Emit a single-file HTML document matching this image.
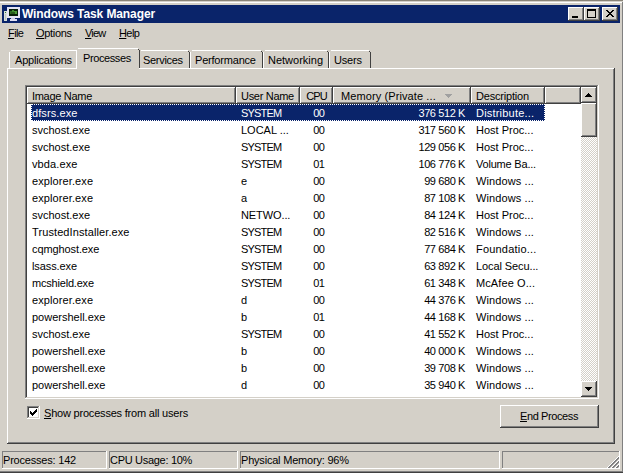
<!DOCTYPE html>
<html><head><meta charset="utf-8"><style>
html,body{margin:0;padding:0;width:623px;height:473px;overflow:hidden;background:#D4D0C8;position:relative}
div{position:absolute}
.t{font-family:"Liberation Sans",sans-serif;font-size:11px;white-space:nowrap;color:#000;letter-spacing:-0.2px}
u{text-decoration:underline;text-underline-offset:1px}
</style></head><body>
<div style="left:0px;top:0px;width:623px;height:1px;background:#8a8478"></div><div style="left:0px;top:1px;width:623px;height:1px;background:#D4D0C8"></div><div style="left:0px;top:2px;width:622px;height:1px;background:#FFFFFF"></div><div style="left:622px;top:2px;width:1px;height:471px;background:#808080"></div><div style="left:0px;top:471px;width:622px;height:1px;background:#808080"></div><div style="left:0px;top:472px;width:623px;height:1px;background:#404040"></div><div style="left:2px;top:5px;width:618px;height:18px;background:#0A246A"></div><svg style="position:absolute;left:4px;top:6px" width="16" height="16" viewBox="0 0 16 16" shape-rendering="crispEdges">
<rect x="0" y="5" width="3" height="10" fill="#d8e0d8"/>
<rect x="1" y="6" width="1" height="1" fill="#2a7a3a"/>
<rect x="1" y="8" width="1" height="6" fill="#b8c0c0"/>
<rect x="3" y="1" width="13" height="11" fill="#e4e4f4"/>
<rect x="5" y="3" width="9" height="7" fill="#082008"/>
<rect x="6" y="5" width="2" height="3" fill="#2e6e22"/>
<rect x="8" y="4" width="2" height="3" fill="#3e8a2e"/>
<rect x="10" y="5" width="3" height="3" fill="#4a9a36"/>
<rect x="7" y="6" width="4" height="2" fill="#285a1c"/>
<rect x="7" y="12" width="4" height="1" fill="#c8c8e0"/>
<rect x="6" y="13" width="7" height="2" fill="#e0e0f4"/>
</svg><div class="t" style="left:22px;top:5px;color:#fff;font-weight:bold;line-height:18px;letter-spacing:-0.1px;font-size:12px">Windows Task Manager</div><div style="left:568px;top:7px;width:16px;height:14px;background:#404040"></div><div style="left:568px;top:7px;width:15px;height:13px;background:#FFFFFF"></div><div style="left:569px;top:8px;width:14px;height:12px;background:#808080"></div><div style="left:569px;top:8px;width:13px;height:11px;background:#D4D0C8"></div><div style="left:570px;top:9px;width:12px;height:10px;background:#D4D0C8"></div><div style="left:584px;top:7px;width:16px;height:14px;background:#404040"></div><div style="left:584px;top:7px;width:15px;height:13px;background:#FFFFFF"></div><div style="left:585px;top:8px;width:14px;height:12px;background:#808080"></div><div style="left:585px;top:8px;width:13px;height:11px;background:#D4D0C8"></div><div style="left:586px;top:9px;width:12px;height:10px;background:#D4D0C8"></div><div style="left:602px;top:7px;width:16px;height:14px;background:#404040"></div><div style="left:602px;top:7px;width:15px;height:13px;background:#FFFFFF"></div><div style="left:603px;top:8px;width:14px;height:12px;background:#808080"></div><div style="left:603px;top:8px;width:13px;height:11px;background:#D4D0C8"></div><div style="left:604px;top:9px;width:12px;height:10px;background:#D4D0C8"></div><div style="left:572px;top:16px;width:6px;height:2px;background:#000"></div><div style="left:587px;top:9px;width:9px;height:9px;border:1px solid #000;border-top-width:2px;box-sizing:border-box"></div><svg style="position:absolute;left:606px;top:10px" width="8" height="7" viewBox="0 0 8 7" shape-rendering="crispEdges"><path d="M0 0h2v1h-2zM6 0h2v1h-2zM1 1h2v1h-2zM5 1h2v1h-2zM2 2h4v1h-4zM3 3h2v1h-2zM2 4h4v1h-4zM1 5h2v1h-2zM5 5h2v1h-2zM0 6h2v1h-2zM6 6h2v1h-2z" fill="#000"/></svg><div class="t" style="left:8px;top:27px;line-height:13px;letter-spacing:-0.6px"><u>F</u>ile</div><div class="t" style="left:36px;top:27px;line-height:13px;letter-spacing:-0.3px"><u>O</u>ptions</div><div class="t" style="left:85px;top:27px;line-height:13px;letter-spacing:-0.8px"><u>V</u>iew</div><div class="t" style="left:119px;top:27px;line-height:13px;letter-spacing:-0.6px"><u>H</u>elp</div><div style="left:7px;top:68px;width:608px;height:376px;background:#404040"></div><div style="left:7px;top:68px;width:607px;height:375px;background:#FFFFFF"></div><div style="left:8px;top:69px;width:606px;height:374px;background:#808080"></div><div style="left:8px;top:69px;width:605px;height:373px;background:#D4D0C8"></div><div style="left:9px;top:52px;width:1px;height:16px;background:#FFFFFF"></div><div style="left:10px;top:51px;width:1px;height:1px;background:#FFFFFF"></div><div style="left:11px;top:50px;width:65px;height:1px;background:#FFFFFF"></div><div style="left:10px;top:51px;width:66px;height:17px;background:#D4D0C8"></div><div style="left:11px;top:51px;width:65px;height:17px;background:#D4D0C8"></div><div style="left:77px;top:52px;width:1px;height:16px;background:#404040"></div><div style="left:76px;top:51px;width:1px;height:1px;background:#404040"></div><div class="t" style="left:15px;top:54px;line-height:13px;letter-spacing:-0.2px">Applications</div><div style="left:139px;top:52px;width:1px;height:16px;background:#FFFFFF"></div><div style="left:140px;top:51px;width:1px;height:1px;background:#FFFFFF"></div><div style="left:141px;top:50px;width:47px;height:1px;background:#FFFFFF"></div><div style="left:140px;top:51px;width:48px;height:17px;background:#D4D0C8"></div><div style="left:141px;top:51px;width:47px;height:17px;background:#D4D0C8"></div><div style="left:189px;top:52px;width:1px;height:16px;background:#404040"></div><div style="left:188px;top:51px;width:1px;height:1px;background:#404040"></div><div class="t" style="left:143px;top:54px;line-height:13px;letter-spacing:-0.3px">Services</div><div style="left:190px;top:52px;width:1px;height:16px;background:#FFFFFF"></div><div style="left:191px;top:51px;width:1px;height:1px;background:#FFFFFF"></div><div style="left:192px;top:50px;width:69px;height:1px;background:#FFFFFF"></div><div style="left:191px;top:51px;width:70px;height:17px;background:#D4D0C8"></div><div style="left:192px;top:51px;width:69px;height:17px;background:#D4D0C8"></div><div style="left:262px;top:52px;width:1px;height:16px;background:#404040"></div><div style="left:261px;top:51px;width:1px;height:1px;background:#404040"></div><div class="t" style="left:195px;top:54px;line-height:13px;letter-spacing:-0.2px">Performance</div><div style="left:263px;top:52px;width:1px;height:16px;background:#FFFFFF"></div><div style="left:264px;top:51px;width:1px;height:1px;background:#FFFFFF"></div><div style="left:265px;top:50px;width:62px;height:1px;background:#FFFFFF"></div><div style="left:264px;top:51px;width:63px;height:17px;background:#D4D0C8"></div><div style="left:265px;top:51px;width:62px;height:17px;background:#D4D0C8"></div><div style="left:328px;top:52px;width:1px;height:16px;background:#404040"></div><div style="left:327px;top:51px;width:1px;height:1px;background:#404040"></div><div class="t" style="left:268px;top:54px;line-height:13px;letter-spacing:0.0px">Networking</div><div style="left:329px;top:52px;width:1px;height:16px;background:#FFFFFF"></div><div style="left:330px;top:51px;width:1px;height:1px;background:#FFFFFF"></div><div style="left:331px;top:50px;width:38px;height:1px;background:#FFFFFF"></div><div style="left:330px;top:51px;width:39px;height:17px;background:#D4D0C8"></div><div style="left:331px;top:51px;width:38px;height:17px;background:#D4D0C8"></div><div style="left:370px;top:52px;width:1px;height:16px;background:#404040"></div><div style="left:369px;top:51px;width:1px;height:1px;background:#404040"></div><div class="t" style="left:334px;top:54px;line-height:13px;letter-spacing:-0.2px">Users</div><div style="left:76px;top:50px;width:1px;height:18px;background:#FFFFFF"></div><div style="left:77px;top:49px;width:1px;height:1px;background:#FFFFFF"></div><div style="left:78px;top:48px;width:60px;height:1px;background:#FFFFFF"></div><div style="left:77px;top:49px;width:61px;height:19px;background:#D4D0C8"></div><div style="left:78px;top:49px;width:60px;height:19px;background:#D4D0C8"></div><div style="left:139px;top:50px;width:1px;height:18px;background:#404040"></div><div style="left:138px;top:49px;width:1px;height:1px;background:#404040"></div><div style="left:77px;top:68px;width:62px;height:2px;background:#D4D0C8"></div><div class="t" style="left:83px;top:52px;line-height:13px;letter-spacing:-0.4px">Processes</div><div style="left:25px;top:85px;width:574px;height:314px;background:#FFFFFF"></div><div style="left:25px;top:85px;width:573px;height:313px;background:#808080"></div><div style="left:26px;top:86px;width:572px;height:312px;background:#D4D0C8"></div><div style="left:26px;top:86px;width:571px;height:311px;background:#404040"></div><div style="left:27px;top:87px;width:570px;height:310px;background:#FFFFFF"></div><div style="left:27px;top:87px;width:209px;height:17px;background:#404040"></div><div style="left:27px;top:87px;width:208px;height:16px;background:#FFFFFF"></div><div style="left:28px;top:88px;width:207px;height:15px;background:#808080"></div><div style="left:28px;top:88px;width:206px;height:14px;background:#D4D0C8"></div><div class="t" style="left:32px;top:90px;line-height:13px;letter-spacing:-0.3px">Image Name</div><div style="left:236px;top:87px;width:64px;height:17px;background:#404040"></div><div style="left:236px;top:87px;width:63px;height:16px;background:#FFFFFF"></div><div style="left:237px;top:88px;width:62px;height:15px;background:#808080"></div><div style="left:237px;top:88px;width:61px;height:14px;background:#D4D0C8"></div><div class="t" style="left:241px;top:90px;line-height:13px;letter-spacing:-0.3px">User Name</div><div style="left:300px;top:87px;width:33px;height:17px;background:#404040"></div><div style="left:300px;top:87px;width:32px;height:16px;background:#FFFFFF"></div><div style="left:301px;top:88px;width:31px;height:15px;background:#808080"></div><div style="left:301px;top:88px;width:30px;height:14px;background:#D4D0C8"></div><div class="t" style="left:0px;top:90px;line-height:13px;width:327px;text-align:right;letter-spacing:-0.8px">CPU</div><div style="left:333px;top:87px;width:138px;height:17px;background:#404040"></div><div style="left:333px;top:87px;width:137px;height:16px;background:#FFFFFF"></div><div style="left:334px;top:88px;width:136px;height:15px;background:#808080"></div><div style="left:334px;top:88px;width:135px;height:14px;background:#D4D0C8"></div><div class="t" style="left:341px;top:90px;line-height:13px;letter-spacing:0.1px">Memory (Private ...</div><div style="left:471px;top:87px;width:74px;height:17px;background:#404040"></div><div style="left:471px;top:87px;width:73px;height:16px;background:#FFFFFF"></div><div style="left:472px;top:88px;width:72px;height:15px;background:#808080"></div><div style="left:472px;top:88px;width:71px;height:14px;background:#D4D0C8"></div><div class="t" style="left:476px;top:90px;line-height:13px;letter-spacing:-0.2px">Description</div><div style="left:545px;top:87px;width:36px;height:17px;background:#404040"></div><div style="left:545px;top:87px;width:35px;height:16px;background:#FFFFFF"></div><div style="left:546px;top:88px;width:34px;height:15px;background:#808080"></div><div style="left:546px;top:88px;width:33px;height:14px;background:#D4D0C8"></div><svg style="position:absolute;left:445px;top:94px" width="7" height="4" shape-rendering="crispEdges"><path d="M0 0h7v1h-7zM1 1h5v1h-5zM2 2h3v1h-3zM3 3h1v1h-1z" fill="#a0a0a0"/></svg><div style="left:31px;top:104px;width:514px;height:17px;background:#0A246A"></div><div style="left:31px;top:104px;width:514px;height:17px;box-sizing:border-box;border:1px dotted #fff"></div><div class="t" style="left:32px;top:107px;line-height:13px;color:#fff;letter-spacing:0.1px">dfsrs.exe</div><div class="t" style="left:241px;top:107px;line-height:13px;color:#fff;letter-spacing:-0.8px">SYSTEM</div><div class="t" style="left:0px;top:107px;line-height:13px;color:#fff;width:324px;text-align:right;letter-spacing:-0.8px">00</div><div class="t" style="left:0px;top:107px;line-height:13px;color:#fff;width:465px;text-align:right;letter-spacing:-0.4px">376 512 K</div><div class="t" style="left:476px;top:107px;line-height:13px;color:#fff;letter-spacing:0.2px">Distribute...</div><div class="t" style="left:32px;top:124px;line-height:13px;color:#000;letter-spacing:0.0px">svchost.exe</div><div class="t" style="left:241px;top:124px;line-height:13px;color:#000;letter-spacing:0.0px">LOCAL ...</div><div class="t" style="left:0px;top:124px;line-height:13px;color:#000;width:324px;text-align:right;letter-spacing:-0.8px">00</div><div class="t" style="left:0px;top:124px;line-height:13px;color:#000;width:465px;text-align:right;letter-spacing:-0.4px">317 560 K</div><div class="t" style="left:476px;top:124px;line-height:13px;color:#000;letter-spacing:0.0px">Host Proc...</div><div class="t" style="left:32px;top:141px;line-height:13px;color:#000;letter-spacing:0.0px">svchost.exe</div><div class="t" style="left:241px;top:141px;line-height:13px;color:#000;letter-spacing:-0.8px">SYSTEM</div><div class="t" style="left:0px;top:141px;line-height:13px;color:#000;width:324px;text-align:right;letter-spacing:-0.8px">00</div><div class="t" style="left:0px;top:141px;line-height:13px;color:#000;width:465px;text-align:right;letter-spacing:-0.4px">129 056 K</div><div class="t" style="left:476px;top:141px;line-height:13px;color:#000;letter-spacing:0.0px">Host Proc...</div><div class="t" style="left:32px;top:158px;line-height:13px;color:#000;letter-spacing:0.1px">vbda.exe</div><div class="t" style="left:241px;top:158px;line-height:13px;color:#000;letter-spacing:-0.8px">SYSTEM</div><div class="t" style="left:0px;top:158px;line-height:13px;color:#000;width:324px;text-align:right;letter-spacing:-0.8px">01</div><div class="t" style="left:0px;top:158px;line-height:13px;color:#000;width:465px;text-align:right;letter-spacing:-0.4px">106 776 K</div><div class="t" style="left:476px;top:158px;line-height:13px;color:#000;letter-spacing:-0.2px">Volume Ba...</div><div class="t" style="left:32px;top:175px;line-height:13px;color:#000;letter-spacing:0.1px">explorer.exe</div><div class="t" style="left:241px;top:175px;line-height:13px;color:#000">e</div><div class="t" style="left:0px;top:175px;line-height:13px;color:#000;width:324px;text-align:right;letter-spacing:-0.8px">00</div><div class="t" style="left:0px;top:175px;line-height:13px;color:#000;width:465px;text-align:right;letter-spacing:-0.4px">99 680 K</div><div class="t" style="left:476px;top:175px;line-height:13px;color:#000;letter-spacing:0.1px">Windows ...</div><div class="t" style="left:32px;top:192px;line-height:13px;color:#000;letter-spacing:0.1px">explorer.exe</div><div class="t" style="left:241px;top:192px;line-height:13px;color:#000">a</div><div class="t" style="left:0px;top:192px;line-height:13px;color:#000;width:324px;text-align:right;letter-spacing:-0.8px">00</div><div class="t" style="left:0px;top:192px;line-height:13px;color:#000;width:465px;text-align:right;letter-spacing:-0.4px">87 108 K</div><div class="t" style="left:476px;top:192px;line-height:13px;color:#000;letter-spacing:0.1px">Windows ...</div><div class="t" style="left:32px;top:209px;line-height:13px;color:#000;letter-spacing:0.0px">svchost.exe</div><div class="t" style="left:241px;top:209px;line-height:13px;color:#000;letter-spacing:-0.1px">NETWO...</div><div class="t" style="left:0px;top:209px;line-height:13px;color:#000;width:324px;text-align:right;letter-spacing:-0.8px">00</div><div class="t" style="left:0px;top:209px;line-height:13px;color:#000;width:465px;text-align:right;letter-spacing:-0.4px">84 124 K</div><div class="t" style="left:476px;top:209px;line-height:13px;color:#000;letter-spacing:0.0px">Host Proc...</div><div class="t" style="left:32px;top:226px;line-height:13px;color:#000;letter-spacing:0.1px">TrustedInstaller.exe</div><div class="t" style="left:241px;top:226px;line-height:13px;color:#000;letter-spacing:-0.8px">SYSTEM</div><div class="t" style="left:0px;top:226px;line-height:13px;color:#000;width:324px;text-align:right;letter-spacing:-0.8px">00</div><div class="t" style="left:0px;top:226px;line-height:13px;color:#000;width:465px;text-align:right;letter-spacing:-0.4px">82 516 K</div><div class="t" style="left:476px;top:226px;line-height:13px;color:#000;letter-spacing:0.1px">Windows ...</div><div class="t" style="left:32px;top:243px;line-height:13px;color:#000;letter-spacing:-0.1px">cqmghost.exe</div><div class="t" style="left:241px;top:243px;line-height:13px;color:#000;letter-spacing:-0.8px">SYSTEM</div><div class="t" style="left:0px;top:243px;line-height:13px;color:#000;width:324px;text-align:right;letter-spacing:-0.8px">00</div><div class="t" style="left:0px;top:243px;line-height:13px;color:#000;width:465px;text-align:right;letter-spacing:-0.4px">77 684 K</div><div class="t" style="left:476px;top:243px;line-height:13px;color:#000;letter-spacing:0.2px">Foundatio...</div><div class="t" style="left:32px;top:260px;line-height:13px;color:#000;letter-spacing:-0.1px">lsass.exe</div><div class="t" style="left:241px;top:260px;line-height:13px;color:#000;letter-spacing:-0.8px">SYSTEM</div><div class="t" style="left:0px;top:260px;line-height:13px;color:#000;width:324px;text-align:right;letter-spacing:-0.8px">00</div><div class="t" style="left:0px;top:260px;line-height:13px;color:#000;width:465px;text-align:right;letter-spacing:-0.4px">63 892 K</div><div class="t" style="left:476px;top:260px;line-height:13px;color:#000;letter-spacing:-0.1px">Local Secu...</div><div class="t" style="left:32px;top:277px;line-height:13px;color:#000;letter-spacing:-0.2px">mcshield.exe</div><div class="t" style="left:241px;top:277px;line-height:13px;color:#000;letter-spacing:-0.8px">SYSTEM</div><div class="t" style="left:0px;top:277px;line-height:13px;color:#000;width:324px;text-align:right;letter-spacing:-0.8px">01</div><div class="t" style="left:0px;top:277px;line-height:13px;color:#000;width:465px;text-align:right;letter-spacing:-0.4px">61 348 K</div><div class="t" style="left:476px;top:277px;line-height:13px;color:#000;letter-spacing:0.1px">McAfee O...</div><div class="t" style="left:32px;top:294px;line-height:13px;color:#000;letter-spacing:0.1px">explorer.exe</div><div class="t" style="left:241px;top:294px;line-height:13px;color:#000">d</div><div class="t" style="left:0px;top:294px;line-height:13px;color:#000;width:324px;text-align:right;letter-spacing:-0.8px">00</div><div class="t" style="left:0px;top:294px;line-height:13px;color:#000;width:465px;text-align:right;letter-spacing:-0.4px">44 376 K</div><div class="t" style="left:476px;top:294px;line-height:13px;color:#000;letter-spacing:0.1px">Windows ...</div><div class="t" style="left:32px;top:311px;line-height:13px;color:#000;letter-spacing:0.0px">powershell.exe</div><div class="t" style="left:241px;top:311px;line-height:13px;color:#000">b</div><div class="t" style="left:0px;top:311px;line-height:13px;color:#000;width:324px;text-align:right;letter-spacing:-0.8px">01</div><div class="t" style="left:0px;top:311px;line-height:13px;color:#000;width:465px;text-align:right;letter-spacing:-0.4px">44 168 K</div><div class="t" style="left:476px;top:311px;line-height:13px;color:#000;letter-spacing:0.1px">Windows ...</div><div class="t" style="left:32px;top:328px;line-height:13px;color:#000;letter-spacing:0.0px">svchost.exe</div><div class="t" style="left:241px;top:328px;line-height:13px;color:#000;letter-spacing:-0.8px">SYSTEM</div><div class="t" style="left:0px;top:328px;line-height:13px;color:#000;width:324px;text-align:right;letter-spacing:-0.8px">00</div><div class="t" style="left:0px;top:328px;line-height:13px;color:#000;width:465px;text-align:right;letter-spacing:-0.4px">41 552 K</div><div class="t" style="left:476px;top:328px;line-height:13px;color:#000;letter-spacing:0.0px">Host Proc...</div><div class="t" style="left:32px;top:345px;line-height:13px;color:#000;letter-spacing:0.0px">powershell.exe</div><div class="t" style="left:241px;top:345px;line-height:13px;color:#000">b</div><div class="t" style="left:0px;top:345px;line-height:13px;color:#000;width:324px;text-align:right;letter-spacing:-0.8px">00</div><div class="t" style="left:0px;top:345px;line-height:13px;color:#000;width:465px;text-align:right;letter-spacing:-0.4px">40 000 K</div><div class="t" style="left:476px;top:345px;line-height:13px;color:#000;letter-spacing:0.1px">Windows ...</div><div class="t" style="left:32px;top:362px;line-height:13px;color:#000;letter-spacing:0.0px">powershell.exe</div><div class="t" style="left:241px;top:362px;line-height:13px;color:#000">b</div><div class="t" style="left:0px;top:362px;line-height:13px;color:#000;width:324px;text-align:right;letter-spacing:-0.8px">00</div><div class="t" style="left:0px;top:362px;line-height:13px;color:#000;width:465px;text-align:right;letter-spacing:-0.4px">39 708 K</div><div class="t" style="left:476px;top:362px;line-height:13px;color:#000;letter-spacing:0.1px">Windows ...</div><div class="t" style="left:32px;top:379px;line-height:13px;color:#000;letter-spacing:0.0px">powershell.exe</div><div class="t" style="left:241px;top:379px;line-height:13px;color:#000">d</div><div class="t" style="left:0px;top:379px;line-height:13px;color:#000;width:324px;text-align:right;letter-spacing:-0.8px">00</div><div class="t" style="left:0px;top:379px;line-height:13px;color:#000;width:465px;text-align:right;letter-spacing:-0.4px">35 940 K</div><div class="t" style="left:476px;top:379px;line-height:13px;color:#000;letter-spacing:0.1px">Windows ...</div><div style="left:581px;top:103px;width:16px;height:278px;background-color:#fff;background-image:repeating-conic-gradient(#D4D0C8 0 25%, #fff 0 50%);background-size:2px 2px"></div><div style="left:581px;top:87px;width:16px;height:16px;background:#404040"></div><div style="left:581px;top:87px;width:15px;height:15px;background:#FFFFFF"></div><div style="left:582px;top:88px;width:14px;height:14px;background:#808080"></div><div style="left:582px;top:88px;width:13px;height:13px;background:#D4D0C8"></div><div style="left:583px;top:89px;width:12px;height:12px;background:#D4D0C8"></div><div style="left:581px;top:103px;width:16px;height:34px;background:#404040"></div><div style="left:581px;top:103px;width:15px;height:33px;background:#FFFFFF"></div><div style="left:582px;top:104px;width:14px;height:32px;background:#808080"></div><div style="left:582px;top:104px;width:13px;height:31px;background:#D4D0C8"></div><div style="left:583px;top:105px;width:12px;height:30px;background:#D4D0C8"></div><div style="left:581px;top:381px;width:16px;height:16px;background:#404040"></div><div style="left:581px;top:381px;width:15px;height:15px;background:#FFFFFF"></div><div style="left:582px;top:382px;width:14px;height:14px;background:#808080"></div><div style="left:582px;top:382px;width:13px;height:13px;background:#D4D0C8"></div><div style="left:583px;top:383px;width:12px;height:12px;background:#D4D0C8"></div><svg style="position:absolute;left:585px;top:93px" width="7" height="4" shape-rendering="crispEdges"><path d="M3 0h1v1h-1zM2 1h3v1h-3zM1 2h5v1h-5zM0 3h7v1h-7z" fill="#000"/></svg><svg style="position:absolute;left:585px;top:387px" width="7" height="4" shape-rendering="crispEdges"><path d="M0 0h7v1h-7zM1 1h5v1h-5zM2 2h3v1h-3zM3 3h1v1h-1z" fill="#000"/></svg><div style="left:27px;top:406px;width:13px;height:13px;background:#FFFFFF"></div><div style="left:27px;top:406px;width:12px;height:12px;background:#808080"></div><div style="left:28px;top:407px;width:11px;height:11px;background:#D4D0C8"></div><div style="left:28px;top:407px;width:10px;height:10px;background:#404040"></div><div style="left:29px;top:408px;width:9px;height:9px;background:#FFFFFF"></div><svg style="position:absolute;left:30px;top:409px" width="7" height="7" shape-rendering="crispEdges" fill="#000"><rect x="6" y="0" width="1" height="1"/><rect x="5" y="1" width="1" height="1"/><rect x="6" y="1" width="1" height="1"/><rect x="0" y="2" width="1" height="1"/><rect x="4" y="2" width="1" height="1"/><rect x="5" y="2" width="1" height="1"/><rect x="6" y="2" width="1" height="1"/><rect x="0" y="3" width="1" height="1"/><rect x="1" y="3" width="1" height="1"/><rect x="3" y="3" width="1" height="1"/><rect x="4" y="3" width="1" height="1"/><rect x="5" y="3" width="1" height="1"/><rect x="0" y="4" width="1" height="1"/><rect x="1" y="4" width="1" height="1"/><rect x="2" y="4" width="1" height="1"/><rect x="3" y="4" width="1" height="1"/><rect x="4" y="4" width="1" height="1"/><rect x="1" y="5" width="1" height="1"/><rect x="2" y="5" width="1" height="1"/><rect x="3" y="5" width="1" height="1"/><rect x="2" y="6" width="1" height="1"/></svg><div class="t" style="left:44px;top:407px;line-height:13px;letter-spacing:-0.2px"><u>S</u>how processes from all users</div><div style="left:500px;top:405px;width:99px;height:23px;background:#404040"></div><div style="left:500px;top:405px;width:98px;height:22px;background:#FFFFFF"></div><div style="left:501px;top:406px;width:97px;height:21px;background:#808080"></div><div style="left:501px;top:406px;width:96px;height:20px;background:#D4D0C8"></div><div style="left:502px;top:407px;width:95px;height:19px;background:#D4D0C8"></div><div class="t" style="left:499px;top:410px;line-height:13px;width:100px;text-align:center;letter-spacing:-0.4px"><u>E</u>nd Process</div><div style="left:2px;top:451px;width:105px;height:18px;background:#FFFFFF"></div><div style="left:2px;top:451px;width:104px;height:17px;background:#808080"></div><div style="left:3px;top:452px;width:103px;height:16px;background:#D4D0C8"></div><div class="t" style="left:3px;top:454px;line-height:13px;letter-spacing:-0.2px">Processes: 142</div><div style="left:109px;top:451px;width:129px;height:18px;background:#FFFFFF"></div><div style="left:109px;top:451px;width:128px;height:17px;background:#808080"></div><div style="left:110px;top:452px;width:127px;height:16px;background:#D4D0C8"></div><div class="t" style="left:110px;top:454px;line-height:13px;letter-spacing:-0.3px">CPU Usage: 10%</div><div style="left:240px;top:451px;width:260px;height:18px;background:#FFFFFF"></div><div style="left:240px;top:451px;width:259px;height:17px;background:#808080"></div><div style="left:241px;top:452px;width:258px;height:16px;background:#D4D0C8"></div><div class="t" style="left:241px;top:454px;line-height:13px;letter-spacing:-0.2px">Physical Memory: 96%</div><div style="left:502px;top:451px;width:118px;height:18px;background:#FFFFFF"></div><div style="left:502px;top:451px;width:117px;height:17px;background:#808080"></div><div style="left:503px;top:452px;width:116px;height:16px;background:#D4D0C8"></div><svg style="position:absolute;left:605px;top:454px" width="14" height="14" shape-rendering="crispEdges"><rect x="2" y="13" width="1" height="1" fill="#fff"/><rect x="3" y="12" width="1" height="1" fill="#fff"/><rect x="3" y="13" width="1" height="1" fill="#808080"/><rect x="4" y="11" width="1" height="1" fill="#fff"/><rect x="4" y="12" width="1" height="1" fill="#808080"/><rect x="4" y="13" width="1" height="1" fill="#808080"/><rect x="5" y="10" width="1" height="1" fill="#fff"/><rect x="5" y="11" width="1" height="1" fill="#808080"/><rect x="5" y="12" width="1" height="1" fill="#808080"/><rect x="6" y="9" width="1" height="1" fill="#fff"/><rect x="6" y="10" width="1" height="1" fill="#808080"/><rect x="6" y="11" width="1" height="1" fill="#808080"/><rect x="6" y="13" width="1" height="1" fill="#fff"/><rect x="7" y="8" width="1" height="1" fill="#fff"/><rect x="7" y="9" width="1" height="1" fill="#808080"/><rect x="7" y="10" width="1" height="1" fill="#808080"/><rect x="7" y="12" width="1" height="1" fill="#fff"/><rect x="7" y="13" width="1" height="1" fill="#808080"/><rect x="8" y="7" width="1" height="1" fill="#fff"/><rect x="8" y="8" width="1" height="1" fill="#808080"/><rect x="8" y="9" width="1" height="1" fill="#808080"/><rect x="8" y="11" width="1" height="1" fill="#fff"/><rect x="8" y="12" width="1" height="1" fill="#808080"/><rect x="8" y="13" width="1" height="1" fill="#808080"/><rect x="9" y="6" width="1" height="1" fill="#fff"/><rect x="9" y="7" width="1" height="1" fill="#808080"/><rect x="9" y="8" width="1" height="1" fill="#808080"/><rect x="9" y="10" width="1" height="1" fill="#fff"/><rect x="9" y="11" width="1" height="1" fill="#808080"/><rect x="9" y="12" width="1" height="1" fill="#808080"/><rect x="10" y="5" width="1" height="1" fill="#fff"/><rect x="10" y="6" width="1" height="1" fill="#808080"/><rect x="10" y="7" width="1" height="1" fill="#808080"/><rect x="10" y="9" width="1" height="1" fill="#fff"/><rect x="10" y="10" width="1" height="1" fill="#808080"/><rect x="10" y="11" width="1" height="1" fill="#808080"/><rect x="10" y="13" width="1" height="1" fill="#fff"/><rect x="11" y="4" width="1" height="1" fill="#fff"/><rect x="11" y="5" width="1" height="1" fill="#808080"/><rect x="11" y="6" width="1" height="1" fill="#808080"/><rect x="11" y="8" width="1" height="1" fill="#fff"/><rect x="11" y="9" width="1" height="1" fill="#808080"/><rect x="11" y="10" width="1" height="1" fill="#808080"/><rect x="11" y="12" width="1" height="1" fill="#fff"/><rect x="11" y="13" width="1" height="1" fill="#808080"/><rect x="12" y="3" width="1" height="1" fill="#fff"/><rect x="12" y="4" width="1" height="1" fill="#808080"/><rect x="12" y="5" width="1" height="1" fill="#808080"/><rect x="12" y="7" width="1" height="1" fill="#fff"/><rect x="12" y="8" width="1" height="1" fill="#808080"/><rect x="12" y="9" width="1" height="1" fill="#808080"/><rect x="12" y="11" width="1" height="1" fill="#fff"/><rect x="12" y="12" width="1" height="1" fill="#808080"/><rect x="12" y="13" width="1" height="1" fill="#808080"/><rect x="13" y="2" width="1" height="1" fill="#fff"/><rect x="13" y="3" width="1" height="1" fill="#808080"/><rect x="13" y="4" width="1" height="1" fill="#808080"/><rect x="13" y="6" width="1" height="1" fill="#fff"/><rect x="13" y="7" width="1" height="1" fill="#808080"/><rect x="13" y="8" width="1" height="1" fill="#808080"/><rect x="13" y="10" width="1" height="1" fill="#fff"/><rect x="13" y="11" width="1" height="1" fill="#808080"/><rect x="13" y="12" width="1" height="1" fill="#808080"/></svg>
</body></html>
